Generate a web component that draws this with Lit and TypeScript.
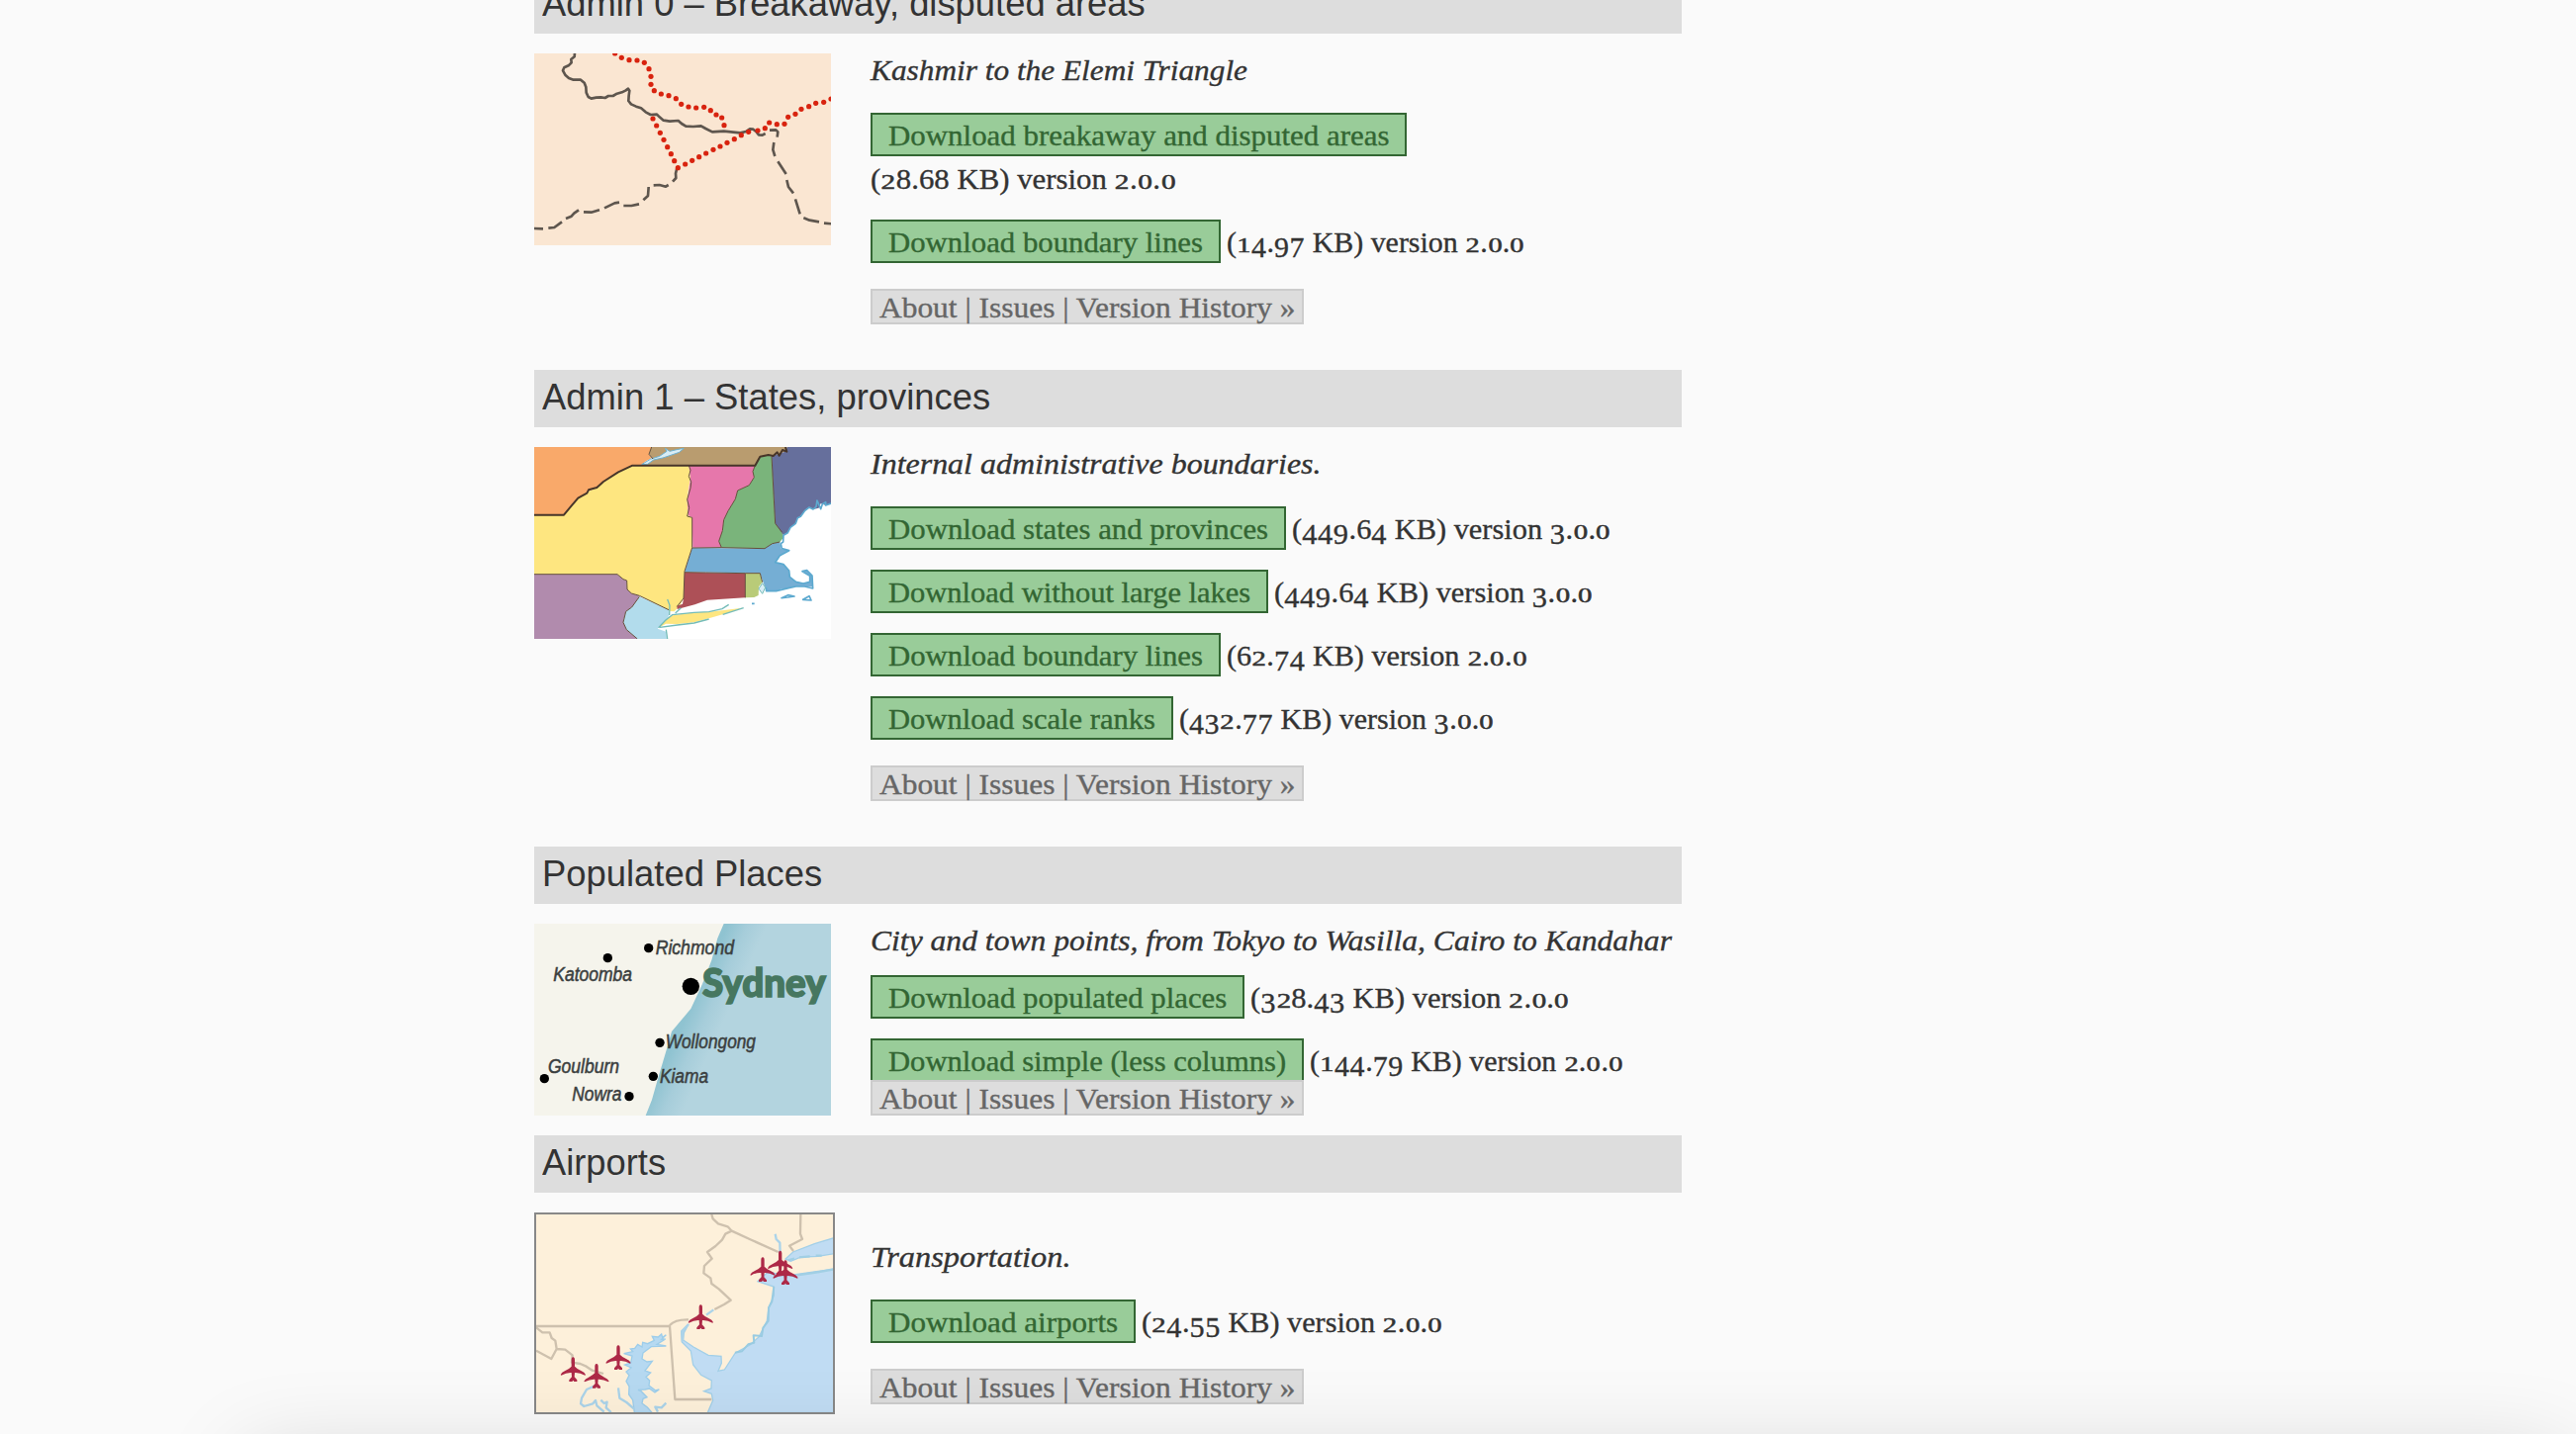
import { LitElement, html, svg, css } from "lit";
import { customElement, property } from "lit/decorators.js";

/** One line of text, set wider or narrower so that it takes up `width` pixels. */
@customElement("fit-text")
class FitText extends LitElement {
  static styles = css`
    :host { display: inline-block; white-space: pre; vertical-align: top; }
    .run { display: inline-block; transform-origin: 0 50%; vertical-align: top; }
    .small, .low { line-height: 0; }
    .small {
      display: inline-block; font-size: 0.72em; margin: 0 0.1em; transform: scaleX(1.32);
      -webkit-text-stroke: 0.5px currentColor;
    }
    .low { position: relative; top: 0.18em; letter-spacing: 0.02em; }
  `;
  @property() text = "";
  @property({ type: Number }) width = 0;
  @property({ type: Boolean }) figures = false;

  updated() {
    const run = this.renderRoot.querySelector<HTMLElement>(".run")!;
    run.style.transform = `scaleX(${(this.width / run.offsetWidth).toFixed(4)})`;
    this.style.width = `${this.width}px`;
  }

  /* Old-style figures: 0-2 sit at x-height, 3 4 5 7 9 hang below the baseline. */
  private glyph(c: string) {
    if ("012".includes(c)) return html`<span class="small">${c}</span>`;
    if ("34579".includes(c)) return html`<span class="low">${c}</span>`;
    return c;
  }

  render() {
    return html`<span class="run">${this.figures ? [...this.text].map((c) => this.glyph(c)) : this.text}</span>`;
  }
}

const borders = svg`
  <rect x="30" y="162" width="900" height="582" fill="#fae6d2"/>
  <g fill="none" stroke="#5e564e" stroke-width="8" stroke-linejoin="round">
    <path d="M153 160 L152 172 L142 180 L143 190 L134 199 L121 205 L117 214 L124 227 L135 237 L149 242 L171 242 L182 251 L187 264 L188 281 L194 294 L203 299 L218 296 L232 295 L245 297 L255 291 L269 291 L281 284 L296 280 L308 274 L315 269 L319 275 L317 290 L316 306 L324 316 L339 323 L354 328 L368 340 L383 348 L402 347 L410 355 L422 365 L441 368 L467 366 L477 375 L490 383 L512 384 L536 382 L550 390 L570 400 L605 398 L655 403 L672 399 L684 391 L694 392 L704 400 L711 409 L722 410 L731 405"/>
    <path d="M744 395 L763 394 L769 400 L767 416" />
    <path d="M757 432 L754 454 L760 474 M769 490 L794 528 M796 546 L801 567 L816 586 M822 604 L836 649 M847 661 L865 668 L894 673 M909 677 L932 679"/>
    <path d="M463 510 L459 526 L460 540 L450 551 M437 561 L429 566 L410 561 L392 562 M377 567 L375 594 L361 607 M348 619 L325 624 L301 624 M288 614 L274 616 L243 631 M228 637 L203 644 L180 643 M165 637 L151 647 L143 656 L126 663 M114 673 L91 690 L73 692 M57 694 L28 693"/>
  </g>
  <g fill="#d8230f">
    ${"275,162 295,175 318,182 342,183 364,190 378,209 384,232 384,256 394,275 415,285 438,290 460,299 476,316 498,324 521,327 545,325 565,335 582,348 599,357 606,380 390,360 401,381 412,403 423,424 434,446 445,467 455,488 466,509 488,498 509,487 530,476 551,465 573,454 594,444 615,433 637,422 658,410 680,400 708,396 730,389 743,372 766,377 789,376 800,355 822,346 840,331 863,323 884,313 908,310 930,300"
      .split(" ").map((p) => {
        const [x, y] = p.split(",");
        return svg`<circle cx=${x} cy=${y} r="7.8"/>`;
      })}
  </g>`;

const states = svg`
  <rect x="30" y="36" width="900" height="582" fill="#fff"/>
  <path fill="#b18bad" d="M30 422 H282 L300 437 L311 441 L312 468 L325 480 L349 487 L340 505 L326 522 L308 535 L300 565 L310 590 L343 618 H30Z"/>
  <path fill="#f9a96a" d="M30 36 H386 L378 58 L386 70 L370 78 L355 90 L328 92 L285 112 L240 141 L220 159 L190 173 L163 191 L145 212 L120 242 H30Z"/>
  <path fill="#b99c6f" d="M386 36 H798 L790 50 L773 57 L755 63 L740 60 L715 65 L700 92 H355 L390 72 L378 58Z"/>
  <path fill="#d9edf5" stroke="#6fb1cf" stroke-width="3" d="M356 89 L382 73 L410 64 L432 49 L427 40 L441 49 L462 44 L484 40 L470 52 L441 62 L420 69 L392 75 L374 88Z"/>
  <path fill="#fee680" d="M30 242 H120 L145 212 L163 191 L190 173 L220 159 L240 141 L285 112 L328 92 H499 L504 130 L497 170 L494 200 L497 243 L509 250 L509 341 L486 413 L483 495 L473 515 L455 535 L440 534 L349 487 L325 480 L312 468 L311 441 L300 437 L282 422 H30Z"/>
  <path fill="#e677ab" d="M499 92 H700 L693 110 L697 128 L682 152 L647 168 L640 194 L618 230 L605 257 L601 290 L590 322 L598 341 H511 L509 250 L497 243 L494 200 L504 130Z"/>
  <path fill="#7ab47b" d="M700 92 L715 65 L740 60 L750 66 L761 268 L782 295 L787 310 L775 324 L752 329 L729 344 L598 341 L590 322 L601 290 L605 257 L618 230 L640 194 L647 168 L682 152 L697 128 L693 110Z"/>
  <path fill="#666f9c" d="M750 63 L773 57 L790 50 L798 36 H930 V207 L914 213 L899 207 L893 221 L876 225 L864 219 L850 230 L838 247 L829 251 L823 268 L807 280 L799 296 L786 304 L761 268Z"/>
  <path fill="#75aed4" d="M509 342 L729 344 L752 329 L775 324 L779 345 L803 350 L775 365 L761 386 L786 392 L803 411 L805 430 L824 445 L846 450 L866 445 L866 427 L843 413 L857 410 L873 426 L875 460 L824 459 L801 464 L777 467 L764 473 L734 473 L715 419 L486 415Z"/>
  <path fill="#ad5057" d="M486 416 L670 419 V493 L601 497 L555 500 L517 514 L464 528 L463 518 L480 512 L483 495Z"/>
  <path fill="#b9cb78" d="M670 419 H715 L722 446 L711 460 L710 486 L697 492 L670 493Z"/>
  <path fill="#b2dcec" d="M349 490 L438 530 L438 548 L426 568 L404 587 L430 596 L432 618 H343 L310 590 L300 565 L308 535 L326 522 L340 505Z"/>
  <path fill="#fee680" d="M407 584 L428 562 L449 547 L515 538 L560 536 L606 531 L660 524 L612 541 L570 553 L515 568 L464 573 L430 572Z"/>
  <g fill="none" stroke="#65503c" stroke-width="3">
    <path d="M499 92 L504 106 L499 125 L506 142 L504 160 L494 195 L500 220 L494 246 L509 250 V341 L486 413 L483 495 L463 520 M509 342 L598 341 L729 344 L752 329 L775 324 M486 416 L550 417 L670 419 H715 L722 446 M670 419 V493 M700 92 L693 110 L697 128 L682 152 L647 168 L640 194 L618 230 L605 257 L601 290 L590 322 L598 341 M750 63 L761 268 L782 295 M30 422 H282 L300 437 L311 441 L312 468 L325 480 L349 487 L438 530 M349 490 L326 522 L308 535 L300 568 L310 590 L343 618 M386 36 L378 58 L390 72"/>
  </g>
  <path fill="none" stroke="#473529" stroke-width="6" stroke-linejoin="round" d="M30 242 H120 L145 212 L163 191 L190 176 L195 166 L220 159 L240 141 L285 112 L328 92 H700 L715 65 L740 60 L755 63 L767 52 L773 62 L783 45 L796 50 L792 36"/>
  <g fill="none" stroke="#5ca9cf" stroke-width="5" stroke-linejoin="round">
    <path d="M930 207 L914 213 L914 203 L904 209 L899 224 L888 198 L885 217 L876 225 L864 219 L850 230 L838 247 L829 251 L823 268 L807 280 L799 296 L786 304 L785 324 L778 329 L781 344 L803 350 L775 365 L761 386 L786 392 L803 411 L805 430 L824 445 L846 450 L866 445 L866 427 L843 413 L857 410 L873 426 L875 465 L850 459 L824 459 L801 464 L764 473 L734 473 L733 462"/>
    <path d="M780 494 L800 485 L819 489 L799 492Z M845 499 L864 488 L870 501Z M690 511 H698"/>
  </g>
  <path fill="none" stroke="#74bcb8" stroke-width="4" d="M407 584 L428 562 L449 545 L515 538 L560 536 L600 527 L620 514 M602 544 L665 524 M560 558 L515 570 L464 576 L411 583 M434 498 L441 516 L440 546 M458 540 L475 524 M430 590 L434 618"/>
  <path fill="#d9edf5" stroke="#74bcb8" stroke-width="3" d="M722 449 L731 462 L722 481 L711 466Z"/>`;

const town = (x: number, y: number, w: number, name: string) => svg`
  <text x=${x} y=${y} font-size="60" textLength=${w} lengthAdjust="spacingAndGlyphs" fill="#3b3f40" stroke="#3b3f40" stroke-width="1.6"
    font-family="Liberation Sans, Arial, sans-serif" font-style="italic">${name}</text>`;

const cities = svg`
  <defs>
    <linearGradient id="coast" gradientUnits="userSpaceOnUse" x1="470" y1="370" x2="570" y2="415">
      <stop offset="0" stop-color="#8fc3d1"/><stop offset="0.5" stop-color="#a6cdda"/><stop offset="1" stop-color="#b3d4df"/>
    </linearGradient>
  </defs>
  <rect x="30" y="42" width="900" height="582" fill="#f5f4ec"/>
  <path fill="url(#coast)" d="M605 42 L586 86 L568 153 L540 225 L505 300 L447 369 L431 425 L404 516 L387 576 L368 624 H930 V42Z"/>
  <g fill="#000">
    <circle cx="377" cy="116" r="14"/><circle cx="253" cy="146" r="14"/><circle cx="505" cy="232" r="26"/>
    <circle cx="411" cy="403" r="14"/><circle cx="61" cy="512" r="14"/><circle cx="391" cy="505" r="14"/><circle cx="318" cy="566" r="14"/>
  </g>
  ${town(398, 135, 238, "Richmond")}
  ${town(88, 216, 239, "Katoomba")}
  ${town(428, 421, 274, "Wollongong")}
  ${town(72, 496, 216, "Goulburn")}
  ${town(411, 526, 147, "Kiama")}
  ${town(145, 580, 150, "Nowra")}
  <text x="540" y="263" font-size="122" font-weight="900" fill="#467760" stroke="#467760" stroke-width="5" textLength="374"
    lengthAdjust="spacingAndGlyphs" font-family="Lato, sans-serif">Sydney</text>`;

const plane = (x: number, y: number) => svg`
  <path fill="#ad2947" transform="translate(${x} ${y})"
    d="M-1 -37 H1 Q5 -36 5 -30 V-9 Q10 -3 24 4 Q35 8 38 16 L36 18 Q20 9 5 10 L4 23 L12 32 V37 H3 L0 33 L-3 37 H-12 V32 L-4 23 L-5 10 Q-20 9 -36 18 L-38 16 Q-35 8 -24 4 Q-10 -3 -5 -9 V-30 Q-5 -36 -1 -37Z"/>`;

const airports = svg`
  <rect x="36" y="39" width="900" height="600" fill="#fdf0da"/>
  <path fill="#c0dcf3" stroke="#a2cfe8" stroke-width="4" d="M940 205 L880 213 L828 220 L790 226 L740 212 L708 242 L757 258 L757 285 L741 322 L736 362 L712 410 L684 435 L640 459 L607 510 L588 514 L598 490 L597 469 L558 466 L513 441 L482 420 L484 398 L498 372 L476 393 L478 426 L505 453 L512 495 L536 526 L568 543 L567 567 L545 575 L568 583 L572 603 L556 640 H940Z"/>
  <path fill="#c0dcf3" stroke="#a2cfe8" stroke-width="4" d="M940 110 L880 128 L815 153 L792 174 L808 181 L840 168 L890 166 L940 158Z"/>
  <path fill="#b6d9f1" stroke="#9dcdea" stroke-width="4" d="M430 404 L419 412 L416 402 L406 411 L388 409 L394 421 L374 431 L359 427 L357 441 L344 433 L335 445 L322 447 L329 455 L302 461 L327 468 L323 489 L305 495 L324 504 L309 516 L318 527 L309 545 L318 561 L317 585 L329 602 L334 640 H387 L373 624 L357 612 L360 598 L372 593 L354 575 L345 571 L366 570 L379 567 L396 579 L409 570 L398 573 L378 558 L380 543 L369 532 L383 519 L366 513 L388 484 L372 486 L357 477 L360 459 L385 440 L430 438 L402 433 L428 417 L416 418Z"/>
  <g fill="none" stroke="#abd3e9" stroke-width="7" stroke-linejoin="round">
    <path d="M761 98 L764 114 L775 125 L776 159 M498 372 L478 395 L480 424 M574 328 L552 344 M285 565 L289 596 L310 609 L333 629 M212 560 L189 570 L174 596 L171 613 L181 621 L208 613 L216 603 L220 619 L242 638 M232 602 L242 612 L251 608 L248 625 L263 639 M430 611 L416 625 L397 623 L405 638"/>
    <path d="M757 258 L751 303 L741 322 L740 362 L724 383 L720 408 L695 406 L697 428 L679 433 L660 454 L639 458" stroke="#99cbe1" stroke-width="6"/>
    <path d="M800 178 L819 173 M834 169 L866 166 M884 164 L902 164 M828 223 L870 217 L890 214 L938 205" stroke="#a1cfe4"/>
  </g>
  <g fill="none" stroke="#8c8072" stroke-opacity=".42" stroke-width="7" stroke-linejoin="round">
    <path d="M36 378 H441 L457 600 H568 M441 375 Q457 357 498 358 M568 39 L572 52 L588 67 L617 76 L629 89 L610 98 L600 116 L580 135 L555 153 L569 173 L546 195 L544 217 L565 232 L568 249 L590 265 L626 299 L606 312 L577 327 M629 89 L690 117 L770 153 M838 39 L837 98 L843 114 L804 134 L816 150 M36 382 L55 397 L77 397 L83 414 L94 422 L98 447 L82 477 L36 452 M98 447 L124 449 L146 466 L144 488 L170 492 L188 500 L206 512 L240 522"/>
  </g>
  ${plane(723, 206)}${plane(776, 186)}${plane(792, 215)}${plane(535, 350)}${plane(285, 473)}${plane(148, 509)}${plane(219, 529)}`;

interface Download { label: string; labelWidth: number; info: string; infoWidth: number; }
interface Entry {
  title: string; titleWidth: number; view: string; art: unknown; kind: string;
  note: string; noteWidth: number; files: Download[];
}

const entries: Entry[] = [
  {
    title: "Admin 0 – Breakaway, disputed areas", titleWidth: 610, view: "30 162 900 582", art: borders, kind: "",
    note: "Kashmir to the Elemi Triangle", noteWidth: 381,
    files: [
      { label: "Download breakaway and disputed areas", labelWidth: 506, info: "(28.68 KB) version 2.0.0", infoWidth: 308 },
      { label: "Download boundary lines", labelWidth: 318, info: "(14.97 KB) version 2.0.0", infoWidth: 301 },
    ],
  },
  {
    title: "Admin 1 – States, provinces", titleWidth: 453, view: "30 36 900 582", art: states, kind: "",
    note: "Internal administrative boundaries.", noteWidth: 455,
    files: [
      { label: "Download states and provinces", labelWidth: 384, info: "(449.64 KB) version 3.0.0", infoWidth: 322 },
      { label: "Download without large lakes", labelWidth: 366, info: "(449.64 KB) version 3.0.0", infoWidth: 322 },
      { label: "Download boundary lines", labelWidth: 318, info: "(62.74 KB) version 2.0.0", infoWidth: 304 },
      { label: "Download scale ranks", labelWidth: 270, info: "(432.77 KB) version 3.0.0", infoWidth: 318 },
    ],
  },
  {
    title: "Populated Places", titleWidth: 283, view: "30 42 900 582", art: cities, kind: "tight",
    note: "City and town points, from Tokyo to Wasilla, Cairo to Kandahar", noteWidth: 810,
    files: [
      { label: "Download populated places", labelWidth: 342, info: "(328.43 KB) version 2.0.0", infoWidth: 322 },
      { label: "Download simple (less columns)", labelWidth: 402, info: "(144.79 KB) version 2.0.0", infoWidth: 317 },
    ],
  },
  {
    title: "Airports", titleWidth: 125, view: "36 39 900 600", art: airports, kind: "framed",
    note: "Transportation.", noteWidth: 203,
    files: [{ label: "Download airports", labelWidth: 232, info: "(24.55 KB) version 2.0.0", infoWidth: 304 }],
  },
];

@customElement("app-root")
class AppRoot extends LitElement {
  static styles = css`
    :host { display: block; }
    .page {
      position: relative; box-sizing: border-box; height: 1450px; overflow: hidden;
      background: #fafafa; color: #333; font: 30px "Liberation Serif", Georgia, serif;
      -webkit-text-stroke: 0.35px currentColor;
    }
    .list { width: 1160px; margin: -24px 0 0 540px; }
    .title {
      height: 58px; margin: 0; padding-left: 8px; background: #ddd; color: #333;
      font: 400 36px/55px "Liberation Sans", Arial, sans-serif; -webkit-text-stroke: 0;
    }
    .body { display: flex; align-items: flex-start; padding: 20px 0 46px; }
    .art { flex: none; width: 300px; height: 194px; display: block; -webkit-text-stroke: 0; }
    .col { width: 820px; margin-left: 40px; }
    .note { height: 40px; line-height: 34px; font-style: italic; margin-bottom: 20px; }
    .files { display: flex; flex-direction: column; gap: 20px; }
    .file { display: flex; flex-wrap: wrap; column-gap: 6px; line-height: 46px; }
    .info { height: 44px; }
    .button {
      box-sizing: border-box; height: 44px; padding: 0 16px; line-height: 42px;
      border: 2px solid #363; background: #9c9; color: #363;
    }
    .more {
      box-sizing: border-box; position: relative; width: 438px; height: 36px; margin-top: 26px; padding-left: 7px;
      border: 2px solid #ccc; background: #ddd; color: #666; line-height: 34px;
    }
    .tight .note { margin-bottom: 12px; }
    .tight .more { margin-top: -2px; }
    .tight .body { padding-bottom: 20px; }
    .framed .art { height: 200px; border: 2px solid #888; }
    .framed .col { margin: 28px 0 0 36px; }
    .shade {
      position: absolute; left: 250px; right: 12px; top: 1474px; height: 160px;
      box-shadow: 0 0 90px rgba(0, 0, 0, 0.17);
    }
  `;

  render() {
    return html`
      <div class="page">
        <main class="list">
          ${entries.map((e) => html`
            <section class=${e.kind}>
              <h2 class="title"><fit-text .text=${e.title} .width=${e.titleWidth}></fit-text></h2>
              <div class="body">
                <svg class="art" viewBox=${e.view} preserveAspectRatio="none">${e.art}</svg>
                <div class="col">
                  <div class="note"><fit-text .text=${e.note} .width=${e.noteWidth}></fit-text></div>
                  <div class="files">
                    ${e.files.map((f) => html`
                      <div class="file">
                        <a class="button"><fit-text .text=${f.label} .width=${f.labelWidth}></fit-text></a>
                        <fit-text class="info" .text=${f.info} .width=${f.infoWidth} .figures=${true}></fit-text>
                      </div>`)}
                  </div>
                  <div class="more"><fit-text .text=${"About | Issues | Version History »"} .width=${420}></fit-text></div>
                </div>
              </div>
            </section>`)}
        </main>
        <div class="shade"></div>
      </div>`;
  }
}
